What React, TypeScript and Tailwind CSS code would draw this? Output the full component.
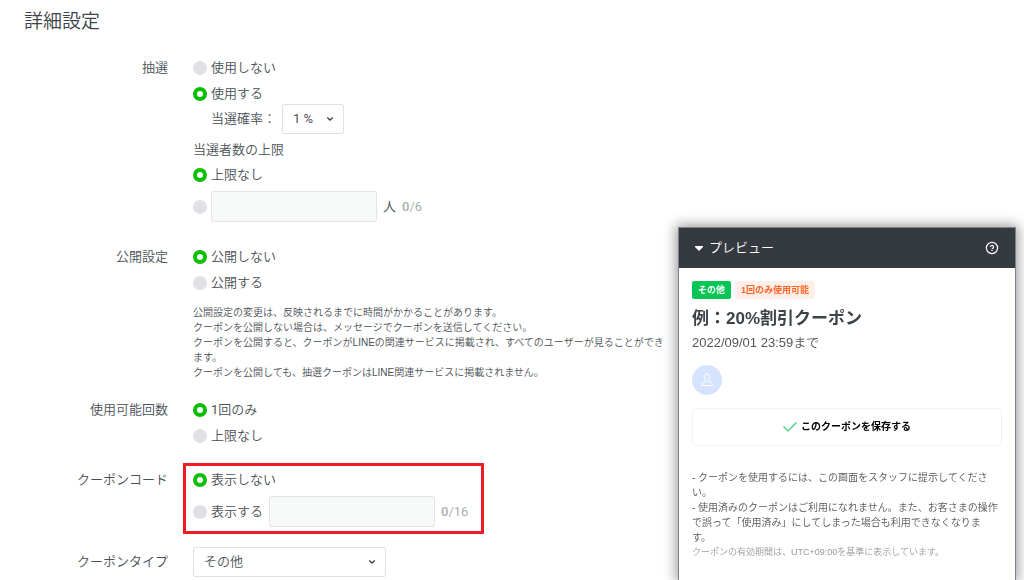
import { useState } from 'react'
import type { ReactNode } from 'react'

function Radio({ name, label, checked, onSelect }: { name: string; label?: ReactNode; checked: boolean; onSelect: () => void }) {
  return (
    <label className="flex h-5 items-center">
      <input
        type="radio"
        name={name}
        aria-label={label ? undefined : '人数を指定'}
        checked={checked}
        onChange={onSelect}
        className="mr-1 size-[14px] shrink-0 appearance-none rounded-full bg-[#dfe1e6] checked:border-4 checked:border-[#08bf00] checked:bg-white"
      />
      {label}
    </label>
  )
}

function Chevron({ className }: { className: string }) {
  return (
    <svg viewBox="0 0 8 6" className={className} fill="none" stroke="#3f464d" strokeWidth="1.5">
      <path d="M1.200 1.500 4 4 6.800 1.500" />
    </svg>
  )
}

function Row({ title, className = '', children }: { title: string; className?: string; children: ReactNode }) {
  return (
    <div className={`grid grid-cols-[144px_1fr] gap-x-[25px] ${className}`}>
      <div className="text-right">{title}</div>
      <div className="flex flex-col items-start gap-[6px]">{children}</div>
    </div>
  )
}

const inputClass = 'h-[31px] w-[166px] rounded-xs border border-[#e3e5e5] bg-[#f7f9f8] px-2 outline-none'
const selectClass = 'block h-[30px] appearance-none rounded-xs border border-[#dfe1e3] bg-white pl-[10px] outline-none'
const chevronClass = 'pointer-events-none absolute top-3 right-[10px] h-[6px] w-2'

function Preview() {
  const [open, setOpen] = useState(true)

  return (
    <aside className="fixed top-[227px] right-2 bottom-0 w-[338px] border-x border-t border-[#7e818c] bg-white font-['Liberation_Sans','Noto_Sans_CJK_JP',sans-serif] shadow-[0_0_12px_2px_rgba(0,0,0,0.4)]">
      <div className="flex h-10 items-center justify-between bg-[#353a40] px-4 text-white">
        <button type="button" onClick={() => setOpen(!open)} className="flex items-center gap-[6px] text-[13px] leading-5 font-[350]">
          <svg viewBox="0 0 8 5" className="h-[5px] w-2" fill="currentColor">
            <path d="M0 0h8v1L4 5 0 1z" />
          </svg>
          プレビュー
        </button>
        <button type="button" aria-label="ヘルプ">
          <svg viewBox="0 0 14 14" className="size-[14px]" fill="none" stroke="currentColor" strokeWidth="1.2">
            <circle cx="7" cy="7" r="5.6" />
            <path d="M5.5 6a1.500 1.500 0 1 1 2.300 1.200C7.200 7.500 7 7.700 7 8.200M7 8.900v1.200" />
          </svg>
        </button>
      </div>
      {open && (
        <div className="px-[13px] pt-[13px] text-[#3d4349]">
          <div className="flex gap-1 text-[9px] leading-[18px] font-bold">
            <span className="rounded-xs bg-[#07c656] px-[6px] text-white">その他</span>
            <span className="rounded-xs bg-[#ffefe9] px-[6px] text-[#ff6627]">1回のみ使用可能</span>
          </div>
          <h2 className="mt-[10px] text-[17px] leading-5 font-bold">例：20%割引クーポン</h2>
          <p className="mt-[6px] text-[13px] leading-4 text-[#555]">2022/09/01 23:59まで</p>
          <div className="mt-[14px] flex size-[30px] items-center justify-center rounded-full bg-[#d5e3ff]">
            <svg viewBox="0 0 12 14" className="h-[14px] w-3" fill="none" stroke="#fff" strokeWidth="1">
              <path d="M6 1C4.3 1 3.3 2.2 3.3 3.9c0 1.4.5 2.5 1.4 3.2v1.3L1.6 9.7C.9 10 .7 10.5.7 11.2v1.3h10.6v-1.3c0-.7-.2-1.2-.9-1.5L7.3 8.4V7.1c.9-.7 1.4-1.8 1.4-3.2C8.7 2.2 7.7 1 6 1z" />
            </svg>
          </div>
          <button type="button" className="mt-[13px] flex h-[38px] w-full items-center justify-center gap-1 rounded border border-[#f2f2f2] text-[10px] font-bold text-black">
            <svg viewBox="0 0 14 10" className="h-[10px] w-[14px]" fill="none" stroke="#3acb79" strokeWidth="1.2">
              <path d="M.5 4.500 5 9 13.500.5" />
            </svg>
            このクーポンを保存する
          </button>
          <div className="mt-6 text-[10px] leading-[15px] text-[#555]">
            <p>- クーポンを使用するには、この画面をスタッフに提示してくださ<br />い。</p>
            <p>
              - 使用済みのクーポンはご利用になれません。また、お客さまの操作で誤って「使用済み」にしてしまった場合も利用できなくなりま
              <br />
              す。
            </p>
            <p className="text-[9px] text-[#999]">クーポンの有効期間は、UTC+09:00を基準に表示しています。</p>
          </div>
        </div>
      )}
    </aside>
  )
}

export default function App() {
  const [lottery, setLottery] = useState(true)
  const [limited, setLimited] = useState(false)
  const [open, setOpen] = useState(false)
  const [once, setOnce] = useState(true)
  const [showCode, setShowCode] = useState(false)

  return (
    <div className="min-h-screen bg-white px-6 pt-[10px] font-['Roboto','Noto_Sans_CJK_JP',sans-serif] text-[13px] leading-5 font-[350] text-[#4a5055]">
      <h1 className="text-[19px] leading-6 text-[#3d4349]">詳細設定</h1>

      <Row title="抽選" className="mt-6">
        <Radio name="lottery" label="使用しない" checked={!lottery} onSelect={() => setLottery(false)} />
        <div>
          <Radio name="lottery" label="使用する" checked={lottery} onSelect={() => setLottery(true)} />
          <div className="flex items-center gap-[6px] pl-[18px]">
            <label htmlFor="rate">当選確率：</label>
            <div className="relative">
              <select id="rate" className={`${selectClass} w-[62px] font-normal`}>
                <option>1 %</option>
              </select>
              <Chevron className={chevronClass} />
            </div>
          </div>
        </div>
        <p className="leading-[19px]">当選者数の上限</p>
        <Radio name="limit" label="上限なし" checked={!limited} onSelect={() => setLimited(false)} />
        <div className="flex items-center">
          <Radio name="limit" checked={limited} onSelect={() => setLimited(true)} />
          <input type="text" aria-label="当選者数" disabled={!limited} className={inputClass} />
          <span className="ml-[6px]">人</span>
          <span className="ml-[6px] font-normal text-[#a9b0b0]">
            <b className="font-medium">0</b>/6
          </span>
        </div>
      </Row>

      <Row title="公開設定" className="mt-[25px]">
        <Radio name="open" label="公開しない" checked={!open} onSelect={() => setOpen(false)} />
        <Radio name="open" label="公開する" checked={open} onSelect={() => setOpen(true)} />
        <div className="mt-[6px] w-[475px] font-['Liberation_Sans','Noto_Sans_CJK_JP',sans-serif] text-[10px] leading-[15px]">
          <p>公開設定の変更は、反映されるまでに時間がかかることがあります。</p>
          <p>クーポンを公開しない場合は、メッセージでクーポンを送信してください。</p>
          <p>クーポンを公開すると、クーポンがLINEの関連サービスに掲載され、すべてのユーザーが見ることができます。</p>
          <p>クーポンを公開しても、抽選クーポンはLINE関連サービスに掲載されません。</p>
        </div>
      </Row>

      <Row title="使用可能回数" className="mt-5">
        <Radio
          name="count"
          label={<span><span className="font-normal">1</span>回のみ</span>}
          checked={once}
          onSelect={() => setOnce(true)}
        />
        <Radio name="count" label="上限なし" checked={!once} onSelect={() => setOnce(false)} />
      </Row>

      <Row title="クーポンコード" className="mt-6">
        <div className="relative flex flex-col gap-[6px]">
          <div className="pointer-events-none absolute -inset-x-[10px] -inset-y-[7px] -mr-[6px] border-[3px] border-[#ee1c25]" />
          <Radio name="code" label="表示しない" checked={!showCode} onSelect={() => setShowCode(false)} />
          <div className="flex items-center gap-[6px]">
            <Radio name="code" label="表示する" checked={showCode} onSelect={() => setShowCode(true)} />
            <input type="text" aria-label="クーポンコード" disabled={!showCode} className={inputClass} />
            <span className="font-normal text-[#a9b0b0]">
              <b className="font-medium">0</b>/16
            </span>
          </div>
        </div>
      </Row>

      <div className="mt-5 grid grid-cols-[144px_1fr] items-center gap-x-[25px]">
        <label htmlFor="type" className="text-right">クーポンタイプ</label>
        <div className="relative w-[193px]">
          <select id="type" className={`${selectClass} w-full`}>
            <option>その他</option>
          </select>
          <Chevron className={chevronClass} />
        </div>
      </div>

      <Preview />
    </div>
  )
}
